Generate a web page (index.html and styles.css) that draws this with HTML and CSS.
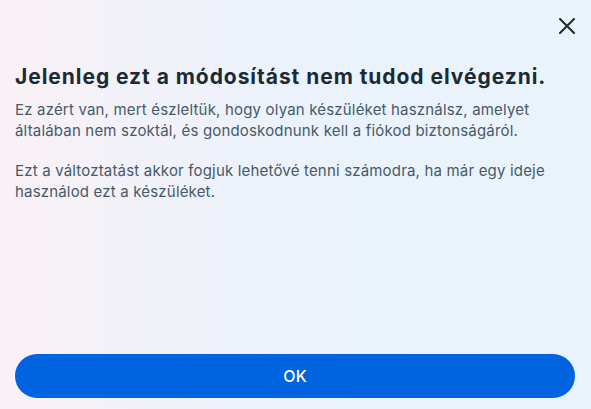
FILE: index.html
```html
<!DOCTYPE html>
<html lang="hu">
<head>
<meta charset="utf-8">
<link rel="stylesheet" href="styles.css">
</head>
<body>
<div class="dialog">
  <div class="topbar">
    <button class="close" aria-label="Bezárás">
      <svg width="16" height="16" viewBox="0 0 16 16"><path d="M1 1 L15 15 M15 1 L1 15" stroke="#1c2b33" stroke-width="2" stroke-linecap="round"/></svg>
    </button>
  </div>
  <div class="content">
    <h1 class="title">Jelenleg ezt a módosítást nem tudod elvégezni.</h1>
    <p class="text">Ez azért van, mert észleltük, hogy olyan készüléket használsz, amelyet általában nem szoktál, és gondoskodnunk kell a fiókod biztonságáról.</p>
    <p class="text">Ezt a változtatást akkor fogjuk lehetővé tenni számodra, ha már egy ideje használod ezt a készüléket.</p>
  </div>
  <div class="footer">
    <button class="ok">OK</button>
  </div>
</div>
</body>
</html>
```
FILE: styles.css
```css
html, body {
  margin: 0;
  padding: 0;
  height: 100%;
}
body {
  font-family: Inter, "Noto Sans", sans-serif;
  color: #1c2b33;
}
.dialog {
  box-sizing: border-box;
  height: 409px;
  display: flex;
  flex-direction: column;
  background: linear-gradient(90deg, #faf1f6 0%, #f1f1f9 25%, #ebf2fb 50%, #eaf3fc 100%);
  padding: 0 16px 11px 15px;
}
.topbar {
  display: flex;
  justify-content: flex-end;
  padding-top: 18px;
  height: 34px;
  box-sizing: border-box;
}
.close {
  border: 0;
  background: none;
  padding: 0;
  width: 16px;
  height: 16px;
  display: flex;
}
.content {
  flex: 1;
  padding-top: 29px;
}
.title {
  margin: 0 0 8px;
  font-size: 21px;
  font-weight: 700;
  line-height: 28px;
  letter-spacing: 0.95px;
}
.text {
  margin: 0 0 19px;
  font-size: 15px;
  line-height: 21px;
  letter-spacing: 0.18px;
  color: #465a69;
}
.footer {
  display: flex;
}
.ok {
  flex: 1;
  height: 44px;
  border: 0;
  border-radius: 22px;
  background: #0064e0;
  color: #fff;
  font-family: inherit;
  font-size: 16px;
  font-weight: 500;
}
```
